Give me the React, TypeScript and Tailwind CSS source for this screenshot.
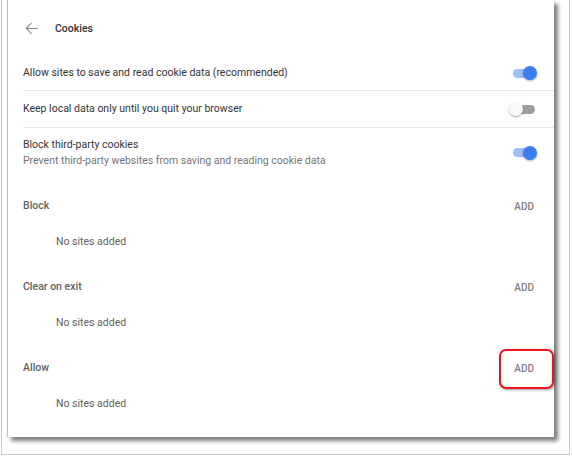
const ROWS = [
  { title: "Allow sites to save and read cookie data (recommended)", on: true, h: "h-[35px]" },
  { title: "Keep local data only until you quit your browser", on: false, h: "h-[37px]" },
];

const SECTIONS = ["Block", "Clear on exit", "Allow"];

function Toggle({ on }: { on: boolean }) {
  return (
    <div className="relative w-[22px] h-[14px] flex items-center">
      <div className={`w-full h-[9px] rounded-full ${on ? "bg-[#9dbdf6]" : "bg-[#9e9e9e]"}`} />
      <div
        className={`absolute top-0 w-[14px] h-[14px] rounded-full shadow-[0_1px_2px_rgba(0,0,0,0.35)] ${
          on ? "right-[-2px] bg-[#3b7ded]" : "left-[-4px] bg-[#fafafa]"
        }`}
      />
    </div>
  );
}

export default function App() {
  return (
    <div
      className="w-[572px] h-[458px] bg-white"
      style={{ fontFamily: "Roboto, 'Liberation Sans', sans-serif" }}
    >
      <div className="ml-[1px] w-[569px] h-[455px] border-b border-r border-l border-[#c8c8c8] pl-[5px]">
        <div className="w-[547px] h-[437px] bg-white border-l border-[#bdbdbd] shadow-[4px_4px_4px_rgba(0,0,0,0.5)] flex flex-col pt-[1px] pl-[15px] pr-[19px]">
          <div className="h-[55px] flex items-center">
            <svg width="19" height="19" viewBox="0 0 24 24" className="-ml-[1px] fill-[#5f6368]">
              <path d="M20 11.3H6.6l5.8-5.8-0.7-0.7-7 7 7 7 0.7-0.7-5.8-5.8H20z" />
            </svg>
            <span className="ml-[14px] text-[10.5px] font-medium text-[#333]">Cookies</span>
          </div>

          {ROWS.map((r) => (
            <div key={r.title} className={`${r.h} flex items-center justify-between border-b border-[#e6e6e6] -mr-[19px] pr-[19px]`}>
              <span className="text-[10.5px] text-[#333]">{r.title}</span>
              <Toggle on={r.on} />
            </div>
          ))}

          <div className="h-[49px] flex items-center justify-between">
            <div className="flex flex-col leading-[16px]">
              <span className="text-[10.5px] text-[#333]">Block third-party cookies</span>
              <span className="text-[10.5px] text-[#757575]">
                Prevent third-party websites from saving and reading cookie data
              </span>
            </div>
            <Toggle on />
          </div>

          {SECTIONS.map((s) => (
            <div key={s} className="pt-[9px] flex flex-col">
              <div className="h-[40px] flex items-center justify-between">
                <span className="text-[10.5px] font-medium text-[#616161]">{s}</span>
                <span className="relative text-[10px] font-medium text-[#808080] mr-[1px]">
                  ADD
                  {s === "Allow" && (
                    <span className="absolute left-[-15px] top-[-12px] w-[55px] h-[40px] rounded-[7px] border-[2.5px] border-[#e8151b] shadow-[1px_1px_3px_rgba(0,0,0,0.4)]" />
                  )}
                </span>
              </div>
              <div className="h-[32px] flex items-center pl-[33px]">
                <span className="text-[10.5px] text-[#616161]">No sites added</span>
              </div>
            </div>
          ))}
        </div>
      </div>
    </div>
  );
}
